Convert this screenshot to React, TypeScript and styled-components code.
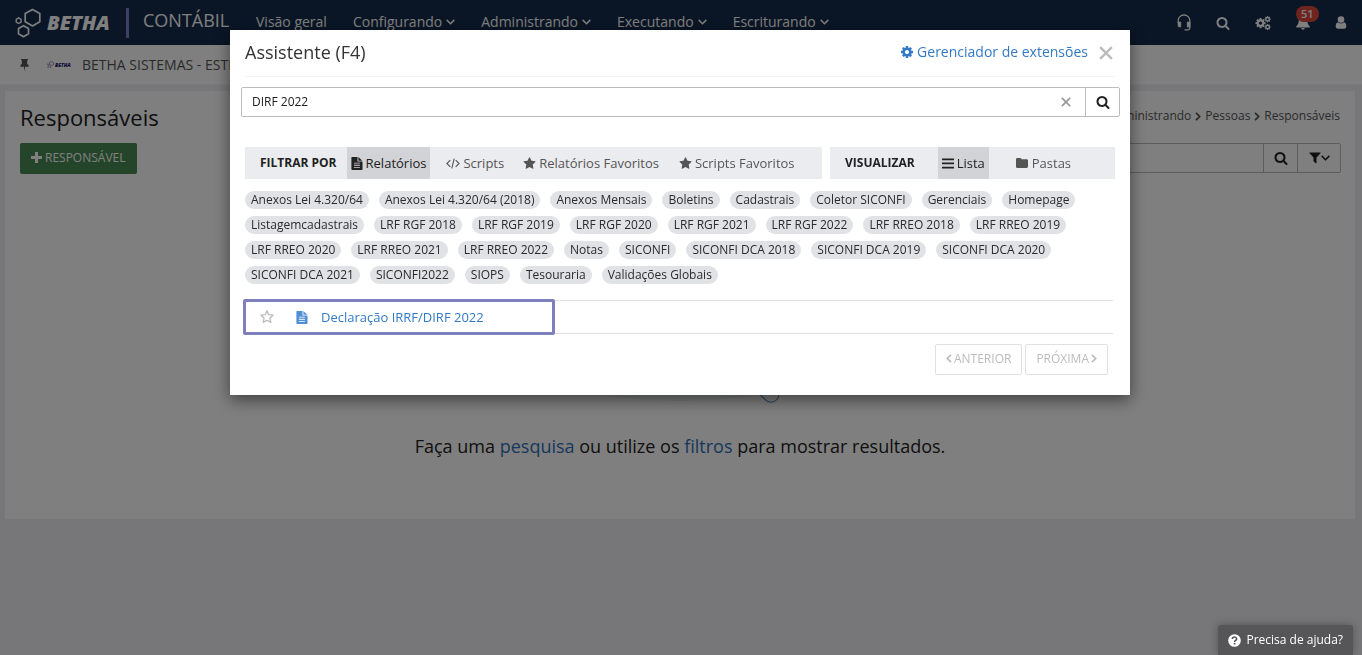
import React from 'react';
import styled, { createGlobalStyle, css } from 'styled-components';

const GlobalStyle = createGlobalStyle`
  * { box-sizing: border-box; }
  html, body { margin: 0; padding: 0; }
  body {
    min-height: 100vh;
    background: #eeeff2;
    color: #212121;
    font: 13px/20px "Open Sans", "Noto Sans", sans-serif;
  }
  button, input { font: inherit; color: inherit; }
  button { cursor: pointer; }
  a { color: #337ac6; text-decoration: none; }
  h1, h2, ul, ol, p { margin: 0; padding: 0; font-weight: 400; }
  ul, ol { list-style: none; }
  svg { display: block; flex: none; }
`;

/* ---------- icons ---------- */

const SEARCH =
  'M1216 832q0-185-131.500-316.500t-316.500-131.500-316.500 131.500-131.500 316.500 131.500 316.500 316.500 131.500 316.500-131.500 131.500-316.500zm512 832q0 52-38 90t-90 38q-54 0-90-38l-343-342q-179 124-399 124-143 0-273.500-55.500t-225-150-150-225-55.500-273.500 55.500-273.500 150-225 225-150 273.500-55.500 273.500 55.500 225 150 150 225 55.500 273.500q0 220-124 399l343 343q37 37 37 90z';
const STAR =
  'M1728 647q0 22-26 48l-363 354 86 500q1 7 1 20 0 21-10.500 35.500t-30.500 14.500q-19 0-40-12l-449-236-449 236q-22 12-40 12-21 0-31.500-14.500t-10.500-35.500q0-6 2-20l86-500-364-354q-25-27-25-48 0-37 56-46l502-73 225-455q19-41 49-41t49 41l225 455 502 73q56 9 56 46z';
const COG =
  'M1152 896q0-106-75-181t-181-75-181 75-75 181 75 181 181 75 181-75 75-181zm512-109v222q0 12-8 23t-20 13l-185 28q-19 54-39 91 35 50 107 138 10 12 10 25t-9 23q-27 37-99 108t-94 71q-12 0-26-9l-138-108q-44 23-91 38-16 136-29 186-7 28-36 28h-222q-14 0-24.500-8.500t-11.500-21.500l-28-184q-49-16-90-37l-141 107q-10 9-25 9-14 0-25-11-126-114-165-168-7-10-7-23 0-12 8-23 15-21 51-66.500t54-70.500q-27-50-41-99l-183-27q-13-2-21-12.500t-8-23.500v-222q0-12 8-23t19-13l186-28q14-46 39-92-40-57-107-138-10-12-10-24 0-10 9-23 26-36 98.500-107.500t94.500-71.500q13 0 26 10l138 107q44-23 91-38 16-136 29-186 7-28 36-28h222q14 0 24.500 8.500t11.500 21.500l28 184q49 16 90 37l142-107q9-9 24-9 13 0 25 10 129 119 165 170 7 8 7 22 0 12-8 23-15 21-51 66.500t-54 70.500q26 50 41 98l183 28q13 2 21 12.500t8 23.500z';

const Glyph = ({ d, size = 14 }: { d: string; size?: number }) => (
  <svg width={size} height={size} viewBox="0 0 1792 1792" fill="currentColor" aria-hidden>
    <path d={d} />
  </svg>
);

const CogsIcon = () => (
  <svg width="16" height="16" viewBox="0 0 16 16" fill="currentColor" aria-hidden>
    <g transform="translate(-.4 2.200) scale(.0066)"><path d={COG} /></g>
    <g transform="translate(9 .6) scale(.004)"><path d={COG} /></g>
    <g transform="translate(9 8.400) scale(.004)"><path d={COG} /></g>
  </svg>
);

const HeadsetIcon = () => (
  <svg width="14" height="17" viewBox="0 0 14 17" fill="none" stroke="currentColor" aria-hidden>
    <path d="M1.200 9V6.500a5.800 5.500 0 0 1 11.600 0V14q0 1.800-1.800 1.800H7.500" strokeWidth="1.300" />
    <path d="M1 8h2.800v5H2.500Q1 13 1 11.500zM13 8h-2.800v5H13z" fill="currentColor" strokeWidth=".6" />
  </svg>
);

const BellIcon = () => (
  <svg width="14" height="15" viewBox="0 0 14 15" fill="currentColor" aria-hidden>
    <path d="M7 0q.9 0 .9 1C10 1.500 11 3 11.200 5c.2 3.500.9 5 2.600 6.400.3.500 0 1.100-.6 1.100H.8c-.6 0-.9-.6-.6-1.100C1.900 10 2.600 8.500 2.800 5 3 3 4 1.500 6.100 1Q6.100 0 7 0zM5.200 13h3.600a1.800 1.800 0 0 1-3.600 0z" />
  </svg>
);

const UserIcon = () => (
  <svg width="12" height="13" viewBox="0 0 12 13" fill="currentColor" aria-hidden>
    <circle cx="6" cy="3.600" r="3.300" />
    <path d="M3 6.200Q.7 6.600.7 10.600.7 12.700 2.600 12.700h6.800q1.900 0 1.900-2.100Q11.300 6.600 9 6.200 6 8.700 3 6.200z" />
  </svg>
);

const PinIcon = () => (
  <svg width="9" height="14" viewBox="0 -1 9 14" fill="currentColor" aria-hidden>
    <path d="M1 0h7v1.300H7.100v3.500Q8.800 5.500 8.800 7.700H5.100L4.500 12.500 3.900 7.700H.2Q.2 5.500 1.900 4.800V1.300H1z" />
  </svg>
);

const Chevron = ({ dir }: { dir: 'down' | 'left' | 'right' }) =>
  dir === 'down' ? (
    <svg width="9" height="6" viewBox="0 0 9 6" fill="none" stroke="currentColor" strokeWidth="1.500" aria-hidden>
      <path d="M.7.900 4.500 4.700 8.300.900" />
    </svg>
  ) : (
    <svg width="6" height="9" viewBox="0 0 6 9" fill="none" stroke="currentColor" strokeWidth="1.700" aria-hidden>
      <path d={dir === 'left' ? 'M5 .8 1.300 4.500 5 8.200' : 'M1 .8 4.700 4.500 1 8.200'} />
    </svg>
  );

const PlusIcon = () => (
  <svg width="11" height="11" viewBox="0 0 11 11" fill="currentColor" aria-hidden>
    <path d="M4 0h3v4h4v3H7v4H4V7H0V4h4z" />
  </svg>
);

const FunnelIcon = () => (
  <svg width="12" height="12" viewBox="0 0 12 12" fill="currentColor" aria-hidden>
    <path d="M.7.500h10.600q.6.200.2.800L7.500 5.500V11q-.2.600-.8.300L4.500 9.200V5.500L.5 1.300Q.1.700.7.500z" />
  </svg>
);

const FileIcon = () => (
  <svg width="12" height="13" viewBox="0 0 12 13" fill="currentColor" aria-hidden>
    <path
      fillRule="evenodd"
      d="M1 0h5.500v4.500H11.500V12.200q0 .8-.8.800H1.200Q.4 13 .4 12.200V.8Q.4 0 1 0zM7.400.1 11.300 3.700H7.400zM2.900 5.700v.9h6v-.9zM2.900 7.800v.9h6v-.9zM2.900 9.900v.9h6v-.9z"
    />
  </svg>
);

const CodeIcon = () => (
  <svg width="14" height="11" viewBox="0 0 14 11" fill="none" stroke="currentColor" strokeWidth="1.100" aria-hidden>
    <path d="M4.300 2.200.9 5.500l3.400 3.300M9.700 2.200l3.400 3.300-3.400 3.300M8.200.7 5.800 10.300" />
  </svg>
);

const BarsIcon = () => (
  <svg width="12" height="11" viewBox="0 0 12 11" fill="currentColor" aria-hidden>
    <path d="M0 .5h12v1.700H0zM0 4.600h12v1.700H0zM0 8.700h12v1.700H0z" />
  </svg>
);

const FolderIcon = () => (
  <svg width="13" height="10" viewBox="0 0 13 10" fill="currentColor" aria-hidden>
    <path d="M1.300 0h2.900q1.300 0 1.300 1.300h5.200q1.300 0 1.300 1.300v6Q12 10 10.700 10H1.300Q0 10 0 8.700V1.300Q0 0 1.300 0z" />
  </svg>
);

const CrossIcon = ({ size, width }: { size: number; width: number }) => (
  <svg width={size} height={size} viewBox="0 0 12 12" fill="none" stroke="currentColor" strokeWidth={width} aria-hidden>
    <path d="M1 1l10 10M11 1 1 11" />
  </svg>
);

const StarOutline = () => (
  <svg width="14" height="14" viewBox="0 0 14 14" fill="none" stroke="currentColor" strokeWidth="1.300" strokeLinejoin="round" aria-hidden>
    <path d="M7 .8l1.800 3.900 4.300.5-3.200 2.900.9 4.300L7 10.300l-3.800 2.100.9-4.300L.9 5.200l4.300-.5z" />
  </svg>
);

const HelpIcon = () => (
  <svg width="13" height="13" viewBox="0 0 13 13" aria-hidden>
    <circle cx="6.500" cy="6.500" r="6.300" fill="#fff" />
    <path d="M4.300 5Q4.500 3 6.500 3t2.200 1.800Q8.700 6 7.300 6.600 6.600 7 6.600 7.900" fill="none" stroke="#565658" strokeWidth="1.600" />
    <path d="M5.700 8.900h1.800v1.600H5.700z" fill="#565658" />
  </svg>
);

const Hexagons = ({ width }: { width: number }) => (
  <svg width={width} viewBox="0 0 27 30" fill="none" stroke="currentColor" strokeWidth="1.700" strokeLinejoin="round" aria-hidden>
    <path d="M17.500 1.500l7.300 4v8.200l-7.300 4.200-7.300-4.200V5.500z" />
    <path d="M8.500 17.700l5 2.900v5.200l-5 2.900-5-2.900v-5.200z" />
    <path d="M3.600 9.800l2.500 1.500v2.800l-2.500 1.400-2.400-1.400v-2.800z" strokeWidth="1.400" />
  </svg>
);

const EmptyDrawing = () => (
  <svg width="220" height="202" viewBox="0 0 220 202" fill="none" aria-hidden>
    <ellipse cx="110" cy="191" rx="75" ry="9" fill="#f1f6f5" />
    <circle cx="140" cy="120" r="44" stroke="#6f95c0" />
    <path d="M160 164l35.300 34.700a8 8 0 0 0 11.400-11.400L172 153" stroke="#6f95c0" strokeWidth="1.200" />
  </svg>
);

/* ---------- page behind the dialog ---------- */

const TopBar = styled.header`
  display: flex;
  align-items: center;
  height: 45px;
  padding: 0 15px;
  background: #142b4b;
  color: #fff;
`;

const Brand = styled.div`
  display: flex;
  align-items: center;
  gap: 5px;
  width: 114px;
  height: 30px;
  border-right: 3px solid #7f7fc8;
  font: italic 800 20px/30px "Open Sans", sans-serif;
`;

const Product = styled.span`
  width: 112px;
  padding: 0 0 6px 14px;
  font-size: 18px;
  line-height: 24px;
`;

const Menu = styled.nav`
  display: flex;
  gap: 26px;
  flex: 1;
  margin-left: 15px;
  padding-bottom: 2px;
`;

const MenuLink = styled.a`
  display: flex;
  align-items: center;
  gap: 4px;
  color: #fff;
  font-size: 14px;
`;

const Tools = styled.div`
  display: flex;
  align-items: center;
  gap: 25px;
`;

const ToolButton = styled.button`
  position: relative;
  display: flex;
  padding: 0;
  border: 0;
  background: none;
  color: #fff;
`;

const Badge = styled.span`
  position: absolute;
  top: -9px;
  left: 0;
  padding: 0 5px;
  border-radius: 8px;
  background: #e0483c;
  font-size: 11px;
  font-weight: 600;
  line-height: 16px;
`;

const ContextBar = styled.div`
  display: flex;
  align-items: center;
  height: 40px;
  padding-left: 20px;
  background: #fff;
  border-bottom: 1px solid #f5f5f5;
  color: #555;
  font-size: 14px;
`;

const SmallBrand = styled.span`
  display: flex;
  align-items: center;
  gap: 1px;
  width: 35px;
  margin-left: 18px;
  color: #16166b;
  font: italic 800 5px/8px "Open Sans", sans-serif;
`;

const Panel = styled.main`
  margin: 6px 7px 0 5px;
  padding: 11px 15px 60px;
  background: #fff;
  a { color: #2f6fb6; }
`;

const PanelHead = styled.div`
  display: flex;
  justify-content: space-between;
  h1 { font-size: 22px; line-height: 30px; }
`;

const Crumbs = styled.ol`
  display: flex;
  align-items: center;
  gap: 4px;
  height: 28px;
  color: #555;
  font-size: 12px;
  li { display: flex; align-items: center; gap: 4px; }
`;

const PanelTools = styled.div`
  display: flex;
  justify-content: space-between;
  margin: 11px -1px 0 0;
`;

const PrimaryButton = styled.button`
  display: flex;
  align-items: center;
  gap: 3px;
  height: 31px;
  padding: 0 11px 2px;
  border: 0;
  border-radius: 2px;
  background: #488a54;
  color: #fff;
  font-size: 12px;
`;

const SearchGroup = styled.div`
  display: flex;
  height: 30px;
  border: 1px solid #bbb;
  border-radius: 2px;
  background: #fff;
`;

const SearchInput = styled.input`
  flex: 1;
  min-width: 0;
  width: 480px;
  padding: 0 10px;
  border: 0;
  background: none;
  outline: 0;
  font-size: 12px;
`;

const GroupButton = styled.button<{ $wide?: boolean }>`
  display: flex;
  align-items: center;
  justify-content: center;
  width: ${(p) => (p.$wide ? 43 : 34)}px;
  padding: 0;
  border: 0;
  border-left: 1px solid #bbb;
  background: none;
`;

const Empty = styled.section`
  display: flex;
  flex-direction: column;
  align-items: center;
  padding-top: 27px;
  p { margin-top: 30px; font-size: 18px; line-height: 26px; }
`;

/* ---------- dialog ---------- */

const Backdrop = styled.div`
  position: fixed;
  inset: 0;
  padding: 30px 2px 0 0;
  background: rgba(0, 0, 0, 0.5);
`;

const Dialog = styled.div`
  max-width: 900px;
  margin: 0 auto;
  padding: 0 15px 20px;
  background: #fff;
  box-shadow: 0 5px 15px rgba(0, 0, 0, 0.5);
`;

const DialogHead = styled.div`
  display: flex;
  align-items: center;
  height: 47px;
  padding-bottom: 2px;
  border-bottom: 1px solid #f3f3f3;
  h2 { flex: 1; font-size: 18px; line-height: 24px; color: #333; }
`;

const ExtensionsLink = styled.a`
  display: flex;
  align-items: center;
  gap: 3px;
  font-size: 14px;
`;

const PlainButton = styled.button<{ $color: string }>`
  display: flex;
  padding: 0;
  border: 0;
  background: none;
  color: ${(p) => p.$color};
`;

const DialogClose = styled(PlainButton)`
  margin: 2px 2px 0 11px;
`;

const DialogSearch = styled(SearchGroup)`
  margin: 10px -5px 0 -4px;
`;

const ClearButton = styled(PlainButton)`
  align-items: center;
  margin-right: 14px;
`;

const Filters = styled.div`
  display: flex;
  gap: 8px;
  margin-top: 30px;
`;

const FilterBar = styled.div<{ $grow?: boolean }>`
  display: flex;
  align-items: center;
  height: 32px;
  padding-left: 15px;
  background: #ebecf0;
  ${(p) => (p.$grow ? css`flex: 1;` : css`width: 285px;`)}
`;

const FilterLabel = styled.strong<{ $gap: number }>`
  margin-right: ${(p) => p.$gap}px;
  font-size: 12px;
  font-weight: 700;
`;

const FilterButton = styled.button<{ $active?: boolean; $gap?: number }>`
  display: flex;
  align-items: center;
  gap: 3px;
  height: 32px;
  margin-right: ${(p) => p.$gap ?? 12}px;
  padding: 0 4px;
  border: 0;
  background: ${(p) => (p.$active ? '#d2d3d7' : 'none')};
  color: ${(p) => (p.$active ? '#212121' : '#555')};
  font-size: 13px;
`;

const Tags = styled.ul`
  display: flex;
  flex-wrap: wrap;
  gap: 7px 10px;
  margin-top: 12px;
`;

const Tag = styled.button`
  display: block;
  height: 18px;
  padding: 0 6px;
  border: 0;
  border-radius: 9px;
  background: #e1e2e6;
  color: #2b2b2b;
  font-size: 12px;
  line-height: 18px;
`;

const Result = styled.div`
  position: relative;
  display: flex;
  align-items: center;
  height: 34px;
  margin: 16px 2px 0 0;
  padding-left: 15px;
  border: solid #dfe0e5;
  border-width: 1px 0;
  a { display: flex; align-items: center; gap: 13px; margin-left: 22px; }
  a svg { color: #4f8fd6; }
`;

const Highlight = styled.span`
  position: absolute;
  inset: -2px auto -2px -2px;
  width: 312px;
  border: 3px solid #7f7fc0;
  border-radius: 2px;
  pointer-events: none;
`;

const Pager = styled.div`
  display: flex;
  justify-content: flex-end;
  gap: 3px;
  margin: 10px 7px 0 0;
`;

const PagerButton = styled.button`
  display: flex;
  align-items: center;
  gap: 2px;
  height: 31px;
  padding: 0 10px 2px;
  border: 1px solid #dfe0e4;
  border-radius: 2px;
  background: #fff;
  color: #bcbcbc;
  font-size: 12px;
  line-height: 18px;
`;

const HelpButton = styled.button`
  position: fixed;
  right: 9px;
  bottom: 0;
  display: flex;
  align-items: center;
  gap: 5px;
  height: 30px;
  padding: 0 10px;
  border: 0;
  border-radius: 3px 3px 0 0;
  background: #565658;
  box-shadow: 0 0 8px rgba(0, 0, 0, 0.3);
  color: #fff;
  font-size: 12px;
  font-weight: 500;
`;

const menus = ['Configurando', 'Administrando', 'Executando', 'Escriturando'];

const tags = [
  'Anexos Lei 4.320/64', 'Anexos Lei 4.320/64 (2018)', 'Anexos Mensais', 'Boletins', 'Cadastrais',
  'Coletor SICONFI', 'Gerenciais', 'Homepage', 'Listagemcadastrais', 'LRF RGF 2018', 'LRF RGF 2019',
  'LRF RGF 2020', 'LRF RGF 2021', 'LRF RGF 2022', 'LRF RREO 2018', 'LRF RREO 2019', 'LRF RREO 2020',
  'LRF RREO 2021', 'LRF RREO 2022', 'Notas', 'SICONFI', 'SICONFI DCA 2018', 'SICONFI DCA 2019',
  'SICONFI DCA 2020', 'SICONFI DCA 2021', 'SICONFI2022', 'SIOPS', 'Tesouraria', 'Validações Globais',
];

export default function App() {
  return (
    <>
      <GlobalStyle />
      <TopBar>
        <Brand><Hexagons width={27} />BETHA</Brand>
        <Product>CONTÁBIL</Product>
        <Menu>
          <MenuLink href="#">Visão geral</MenuLink>
          {menus.map((m) => (
            <MenuLink href="#" key={m}>{m}<Chevron dir="down" /></MenuLink>
          ))}
        </Menu>
        <Tools>
          <ToolButton aria-label="Suporte"><HeadsetIcon /></ToolButton>
          <ToolButton aria-label="Pesquisar"><Glyph d={SEARCH} /></ToolButton>
          <ToolButton aria-label="Configurações"><CogsIcon /></ToolButton>
          <ToolButton aria-label="Notificações"><BellIcon /><Badge>51</Badge></ToolButton>
          <ToolButton aria-label="Usuário"><UserIcon /></ToolButton>
        </Tools>
      </TopBar>
      <ContextBar>
        <PinIcon />
        <SmallBrand><Hexagons width={7} />BETHA</SmallBrand>
        BETHA SISTEMAS - ESTR
      </ContextBar>
      <Panel>
        <PanelHead>
          <h1>Responsáveis</h1>
          <Crumbs>
            <li>Administrando</li>
            <li><Chevron dir="right" />Pessoas</li>
            <li><Chevron dir="right" />Responsáveis</li>
          </Crumbs>
        </PanelHead>
        <PanelTools>
          <PrimaryButton><PlusIcon />RESPONSÁVEL</PrimaryButton>
          <SearchGroup>
            <SearchInput aria-label="Pesquisar responsáveis" />
            <GroupButton aria-label="Pesquisar"><Glyph d={SEARCH} /></GroupButton>
            <GroupButton $wide aria-label="Filtros"><FunnelIcon /><Chevron dir="down" /></GroupButton>
          </SearchGroup>
        </PanelTools>
        <Empty>
          <EmptyDrawing />
          <p>Faça uma <a href="#">pesquisa</a> ou utilize os <a href="#">filtros</a> para mostrar resultados.</p>
        </Empty>
      </Panel>

      <Backdrop>
        <Dialog role="dialog" aria-labelledby="assistente">
          <DialogHead>
            <h2 id="assistente">Assistente (F4)</h2>
            <ExtensionsLink href="#"><Glyph d={COG} />Gerenciador de extensões</ExtensionsLink>
            <DialogClose $color="#bbb" aria-label="Fechar"><CrossIcon size={14} width={2} /></DialogClose>
          </DialogHead>
          <DialogSearch>
            <SearchInput aria-label="Pesquisar no assistente" defaultValue="DIRF 2022" />
            <ClearButton $color="#999" aria-label="Limpar"><CrossIcon size={10} width={2} /></ClearButton>
            <GroupButton aria-label="Pesquisar"><Glyph d={SEARCH} /></GroupButton>
          </DialogSearch>
          <Filters>
            <FilterBar $grow>
              <FilterLabel $gap={10}>FILTRAR POR</FilterLabel>
              <FilterButton $active><FileIcon />Relatórios</FilterButton>
              <FilterButton $gap={11}><CodeIcon />Scripts</FilterButton>
              <FilterButton><Glyph d={STAR} size={13} />Relatórios Favoritos</FilterButton>
              <FilterButton><Glyph d={STAR} size={13} />Scripts Favoritos</FilterButton>
            </FilterBar>
            <FilterBar>
              <FilterLabel $gap={23}>VISUALIZAR</FilterLabel>
              <FilterButton $active $gap={23}><BarsIcon />Lista</FilterButton>
              <FilterButton><FolderIcon />Pastas</FilterButton>
            </FilterBar>
          </Filters>
          <Tags>
            {tags.map((t) => <li key={t}><Tag>{t}</Tag></li>)}
          </Tags>
          <Result>
            <PlainButton $color="#bbb" aria-label="Favoritar"><StarOutline /></PlainButton>
            <a href="#"><FileIcon />Declaração IRRF/DIRF 2022</a>
            <Highlight />
          </Result>
          <Pager>
            <PagerButton disabled><Chevron dir="left" />ANTERIOR</PagerButton>
            <PagerButton disabled>PRÓXIMA<Chevron dir="right" /></PagerButton>
          </Pager>
        </Dialog>
      </Backdrop>
      <HelpButton><HelpIcon />Precisa de ajuda?</HelpButton>
    </>
  );
}
